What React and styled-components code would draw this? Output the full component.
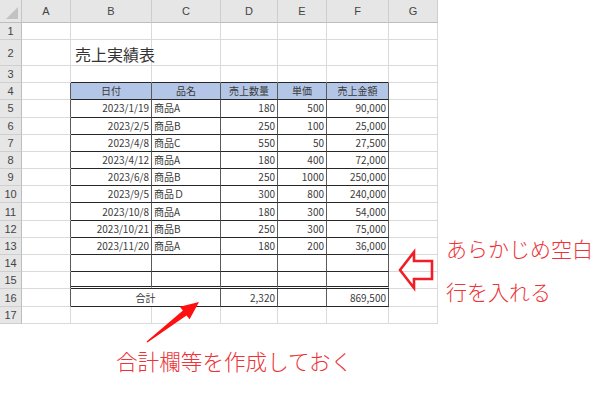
import React from 'react';
import styled, { createGlobalStyle } from 'styled-components';

const GlobalStyle = createGlobalStyle`
  html, body { margin: 0; padding: 0; background: #fff; }
  body { font-family: "Noto Sans CJK JP", "Noto Sans", sans-serif; }
`;

const GRID = '#dadada';
const LINE_H = '#262626';
const LINE_V = '#5a5a5a';
const RED = '#ec3438';

const Page = styled.div`
  position: relative;
  width: 600px;
  height: 395px;
  overflow: hidden;
  display: grid;
  grid-template-columns: 438px 1fr;
  grid-template-rows: auto 1fr;
`;

const Sheet = styled.div`
  display: grid;
  grid-template-columns: 22px 49px 81px 69px 57px 49px 62px 49px;
  grid-template-rows: 22.5px 17.3px 26.7px 16.7px repeat(14, 17.2px);
`;

const Corner = styled.div`
  background: #e6e6e6;
  border-right: 1px solid #c4c4c4;
  border-bottom: 1px solid #bdbdbd;
  position: relative;
  box-sizing: border-box;
  &::after {
    content: '';
    position: absolute;
    right: 3px;
    bottom: 3px;
    border-style: solid;
    border-width: 0 0 12px 12px;
    border-color: transparent transparent #c2c2c2 transparent;
  }
`;

const Head = styled.div`
  background: #e6e6e6;
  border-right: 1px solid ${p => (p.$row ? '#bdbdbd' : '#cdcdcd')};
  border-bottom: 1px solid ${p => (p.$row ? '#cfcfcf' : '#bdbdbd')};
  box-sizing: border-box;
  display: flex;
  align-items: center;
  justify-content: center;
  font-family: "Liberation Sans", "Noto Sans", sans-serif;
  font-size: 11px;
  color: #444;
`;

const Cell = styled.div`
  box-sizing: border-box;
  grid-column: ${p => (p.$span ? `span ${p.$span}` : 'auto')};
  border-right: 1px solid ${p => p.$right || GRID};
  border-bottom: ${p => p.$bottom || `1px solid ${GRID}`};
  background: ${p => p.$bg || 'transparent'};
  display: flex;
  align-items: ${p => (p.$title ? 'flex-end' : 'center')};
  justify-content: ${p => p.$align || 'flex-start'};
  padding: ${p => (p.$title ? '0 0 3px 4px' : '0 2px')};
  font-size: ${p => (p.$title ? '16px' : '10px')};
  color: ${p => (p.$title ? '#333' : '#3a3a3a')};
  white-space: nowrap;
  overflow: visible;
  line-height: 1;
`;

const Side = styled.div`
  display: flex;
  flex-direction: column;
  gap: 22px;
  padding: 238px 0 0 8px;
`;

const Caption = styled.div`
  grid-column: 1 / -1;
  padding: 26px 0 0 116px;
`;

const Note = styled.div`
  color: ${RED};
  font-size: ${p => p.$size || 21}px;
  font-weight: 300;
  line-height: 1;
  white-space: nowrap;
`;

const Overlay = styled.svg`
  position: absolute;
  left: ${p => p.$x}px;
  top: ${p => p.$y}px;
  overflow: visible;
  pointer-events: none;
`;

const data = [
  ['2023/1/19', '商品A', '180', '500', '90,000'],
  ['2023/2/5', '商品B', '250', '100', '25,000'],
  ['2023/4/8', '商品C', '550', '50', '27,500'],
  ['2023/4/12', '商品A', '180', '400', '72,000'],
  ['2023/6/8', '商品B', '250', '1000', '250,000'],
  ['2023/9/5', '商品Ｄ', '300', '800', '240,000'],
  ['2023/10/8', '商品A', '180', '300', '54,000'],
  ['2023/10/21', '商品B', '250', '300', '75,000'],
  ['2023/11/20', '商品A', '180', '200', '36,000'],
];

const cols = ['A', 'B', 'C', 'D', 'E', 'F', 'G'];
const headers = ['日付', '品名', '売上数量', '単価', '売上金額'];
const aligns = ['flex-end', 'flex-start', 'flex-end', 'flex-end', 'flex-end'];

function buildRow(r) {
  const cells = [];
  const inTable = r >= 4 && r <= 16;
  for (let c = 0; c < 7; c++) {
    const d = { key: `${r}-${c}` };
    const tableCol = c >= 1 && c <= 5;
    if (inTable && (c === 0 || tableCol)) d.right = LINE_V;
    if ((r === 3 || inTable) && tableCol) d.bottom = `1px solid ${LINE_H}`;
    if (r === 15 && tableCol) d.bottom = `3px double ${LINE_H}`;
    if (r === 2 && c === 1) { d.text = '売上実績表'; d.title = true; }
    if (r === 4 && tableCol) {
      d.bg = '#b4c6e7';
      d.align = 'center';
      d.text = headers[c - 1];
    }
    if (r >= 5 && r <= 13 && tableCol) {
      d.text = data[r - 5][c - 1];
      d.align = aligns[c - 1];
    }
    cells.push(d);
  }
  if (r === 16) {
    // B:C merged for the total label
    const merged = { key: '16-bc', span: 2, right: LINE_V, bottom: `1px solid ${LINE_H}`, align: 'center', text: '合計' };
    cells[3].text = '2,320';
    cells[3].align = 'flex-end';
    cells[5].text = '869,500';
    cells[5].align = 'flex-end';
    return [cells[0], merged, cells[3], cells[4], cells[5], cells[6]];
  }
  return cells;
}

const App = () => {
  const rows = Array.from({ length: 17 }, (_, i) => i + 1);
  return (
    <Page>
      <GlobalStyle />
      <Sheet>
        <Corner />
        {cols.map(c => <Head key={c}>{c}</Head>)}
        {rows.map(r => (
          <React.Fragment key={r}>
            <Head $row>{r}</Head>
            {buildRow(r).map(d => (
              <Cell
                key={d.key}
                $span={d.span}
                $right={d.right}
                $bottom={d.bottom}
                $bg={d.bg}
                $align={d.align}
                $title={d.title}
              >
                {d.text}
              </Cell>
            ))}
          </React.Fragment>
        ))}
      </Sheet>

      <Side>
        <Note>あらかじめ空白</Note>
        <Note>行を入れる</Note>
      </Side>

      <Caption>
        <Note $size={21.6}>合計欄等を作成しておく</Note>
      </Caption>

      <Overlay $x={396} $y={248} width="42" height="46" viewBox="0 0 42 46">
        <path d="M4 22 L18 4 L18 13 L36 13 L36 31 L18 31 L18 40 Z"
          fill="none" stroke="#f01e26" strokeWidth="2.6" strokeLinejoin="miter" />
      </Overlay>
      <Overlay $x={0} $y={0} width="600" height="395" viewBox="0 0 600 395">
        <polygon
          points="146.6,341.4 182.9,310.6 179.8,306.7 199,302 189.6,319.3 186.5,315.4 147.4,342.6"
          fill="#ff1010" />
      </Overlay>
    </Page>
  );
};

export default App;
